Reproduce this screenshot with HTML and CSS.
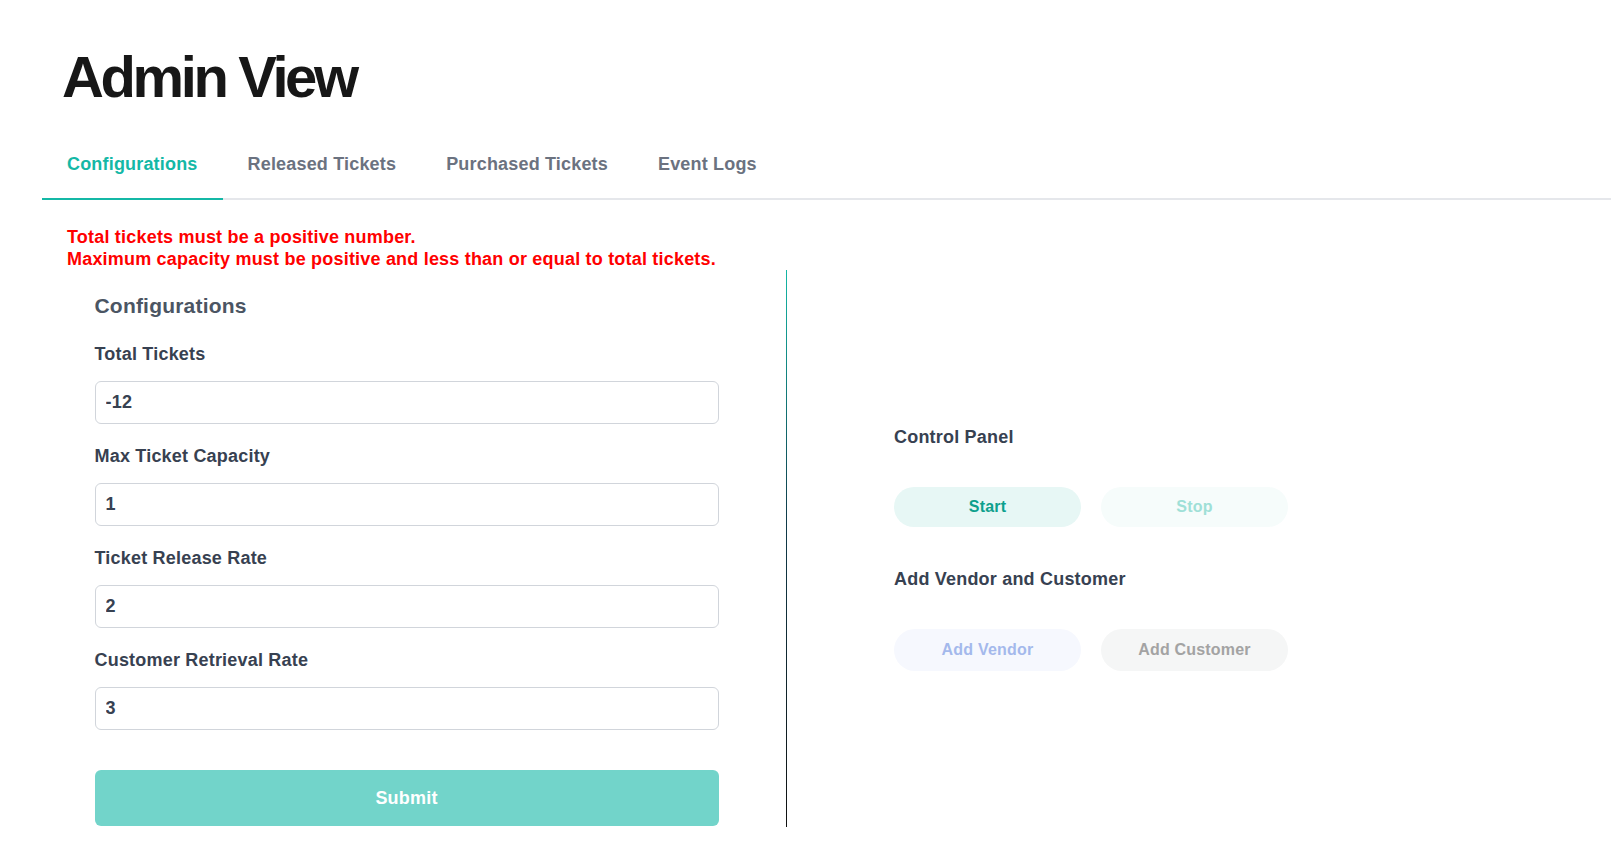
FILE: index.html
```html
<!DOCTYPE html>
<html lang="en">
<head>
<meta charset="utf-8">
<title>Admin View</title>
<link rel="stylesheet" href="styles.css">
</head>
<body>
<div class="page">
  <h1 class="title">Admin View</h1>
  <div class="tablist">
    <div class="tab active">Configurations</div>
    <div class="tab">Released Tickets</div>
    <div class="tab">Purchased Tickets</div>
    <div class="tab">Event Logs</div>
  </div>
  <div class="panel">
    <div class="errors">
      <div>Total tickets must be a positive number.</div>
      <div>Maximum capacity must be positive and less than or equal to total tickets.</div>
    </div>
    <div class="grid">
      <div class="left">
        <h2 class="section-title">Configurations</h2>
        <div class="field">
          <label class="label">Total Tickets</label>
          <input class="input" type="text" value="-12">
        </div>
        <div class="field">
          <label class="label">Max Ticket Capacity</label>
          <input class="input" type="text" value="1">
        </div>
        <div class="field">
          <label class="label">Ticket Release Rate</label>
          <input class="input" type="text" value="2">
        </div>
        <div class="field">
          <label class="label">Customer Retrieval Rate</label>
          <input class="input" type="text" value="3">
        </div>
        <button class="submit">Submit</button>
      </div>
      <div class="right">
        <div class="group">
          <h3 class="group-title">Control Panel</h3>
          <div class="btn-row">
            <button class="pill start">Start</button>
            <button class="pill stop">Stop</button>
          </div>
        </div>
        <div class="group">
          <h3 class="group-title">Add Vendor and Customer</h3>
          <div class="btn-row">
            <button class="pill tall vendor">Add Vendor</button>
            <button class="pill tall customer">Add Customer</button>
          </div>
        </div>
      </div>
    </div>
  </div>
</div>
</body>
</html>
```

FILE: styles.css
```css
* { box-sizing: border-box; }
html, body {
  margin: 0;
  padding: 0;
  background: #ffffff;
}
body {
  font-family: "Liberation Sans", Arial, sans-serif;
  font-weight: 700;
  letter-spacing: 0.2px;
  color: #374151;
}
.page {
  padding: 42px 0 0 42px;
}
.title {
  margin: 0 0 16px 20px;
  font-size: 58px;
  line-height: 70px;
  font-weight: 700;
  letter-spacing: -3.4px;
  color: #171717;
}
.tablist {
  display: flex;
  border-bottom: 2px solid #e5e7eb;
}
.tab {
  padding: 24px 25px 22px;
  font-size: 18px;
  line-height: 24px;
  letter-spacing: 0.18px;
  color: #6b7280;
  border-bottom: 2px solid transparent;
  margin-bottom: -2px;
}
.tab.active {
  color: #14b8a6;
  border-bottom-color: #14b8a6;
}
.panel {
  padding: 27px 0 0 25px;
}
.errors {
  color: #ff0000;
  font-size: 18px;
  line-height: 21.6px;
}
.grid {
  margin-top: 0;
  display: flex;
  align-items: stretch;
}
.left {
  width: 720px;
  padding: 23px 0 1px 27.5px;
  border-right: 1px solid #14b8a6;
  border-image: linear-gradient(to bottom, #14b8a6, #0f3b4a 45%, #111111) 1;
}
.section-title {
  margin: 0 0 24px 0;
  font-size: 21px;
  line-height: 25px;
  color: #4b5563;
}
.field {
  width: 624px;
  margin-bottom: 20px;
}
.label {
  display: block;
  font-size: 18px;
  line-height: 24px;
  margin-bottom: 15px;
  color: #374151;
}
.input {
  display: block;
  width: 100%;
  height: 43px;
  padding: 0 10px;
  border: 1px solid #d1d5db;
  border-radius: 6px;
  font-family: inherit;
  font-weight: 700;
  font-size: 18px;
  letter-spacing: 0.2px;
  color: #374151;
  background: #ffffff;
  outline: none;
}
.submit {
  display: block;
  margin-top: 40px;
  width: 624px;
  height: 56px;
  border: none;
  border-radius: 6px;
  background: #72d4ca;
  color: #ffffff;
  font-family: inherit;
  font-weight: 700;
  font-size: 18px;
  letter-spacing: 0.2px;
}
.right {
  flex: 1;
  display: flex;
  flex-direction: column;
  justify-content: center;
  padding-left: 107px;
  padding-bottom: 2px;
}
.group-title {
  margin: 0 0 38px 0;
  font-size: 18px;
  line-height: 24px;
  color: #374151;
}
.group + .group {
  margin-top: 40px;
}
.btn-row {
  display: flex;
  gap: 20px;
}
.pill {
  width: 187px;
  height: 40px;
  border: none;
  border-radius: 9999px;
  font-family: inherit;
  font-weight: 700;
  font-size: 16px;
  letter-spacing: 0.2px;
}
.pill.tall { height: 42px; }
.start { background: #e7f7f5; color: #0da08d; }
.stop { background: #f6fcfb; color: #9fe0d7; }
.vendor { background: #f6f8fe; color: #a4b9ec; }
.customer { background: #f5f6f6; color: #a3a3a3; }
```
